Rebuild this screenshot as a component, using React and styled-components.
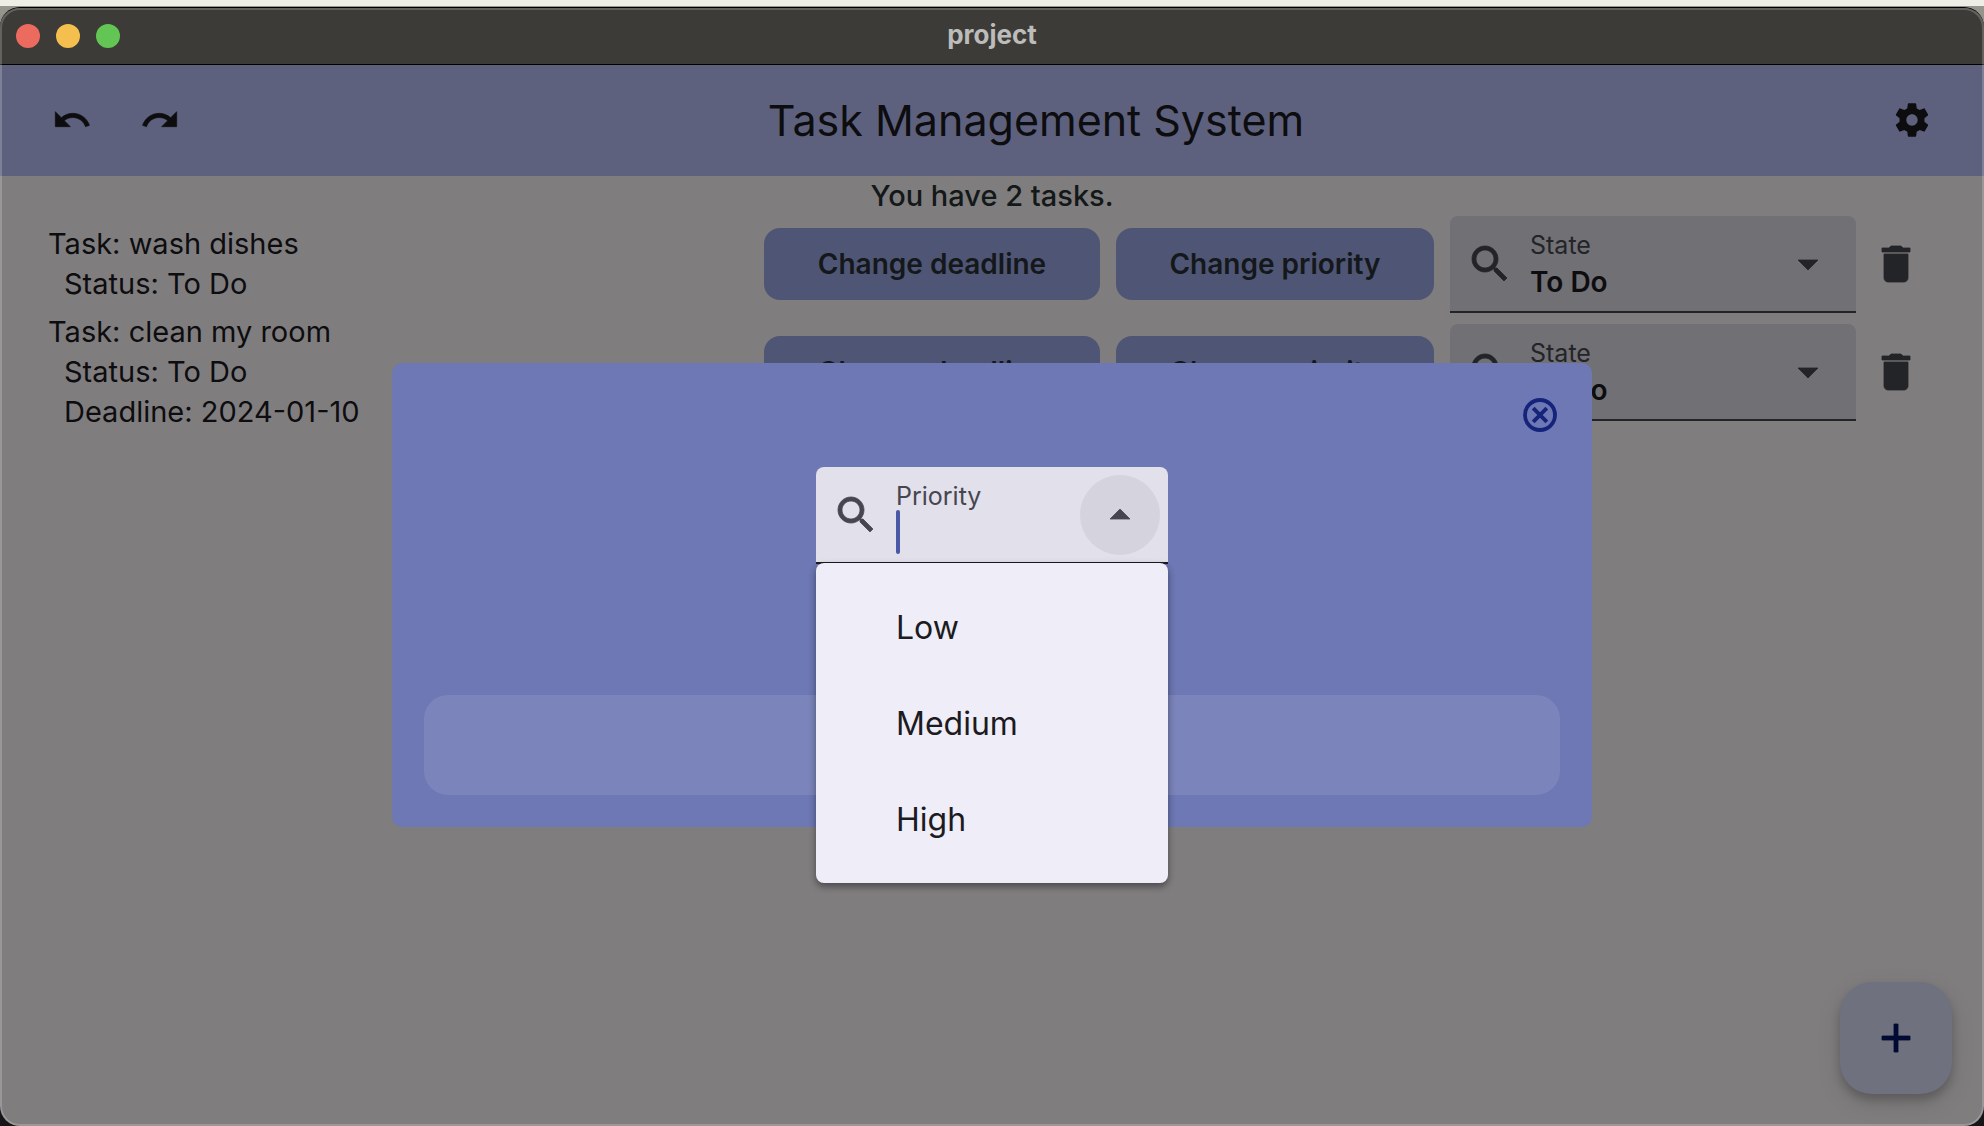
import React, { useState } from "react";
import styled, { createGlobalStyle } from "styled-components";

const GlobalStyle = createGlobalStyle`
  * { box-sizing: border-box; }
  body {
    margin: 0;
    background: #15151a;
    font-family: Inter, Roboto, "Liberation Sans", sans-serif;
  }
  button, input, select {
    margin: 0;
    padding: 0;
    border: 0;
    background: none;
    color: inherit;
    font: inherit;
    outline: none;
  }
  button { cursor: pointer; }
`;

const Desktop = styled.div`
  display: flex;
  min-height: 100vh;
  padding-top: 7px;
  background: linear-gradient(#efeee6 6px, #95978f 6px, #8c8e86 40px, #15151a 41px);
`;

const Window = styled.div`
  position: relative;
  flex: 1;
  display: flex;
  flex-direction: column;
  overflow: hidden;
  border-radius: 20px;
  border-top: 1px solid #000;
  background: #807d7f;

  &::after {
    content: "";
    position: absolute;
    inset: 0;
    border: 2px solid rgba(255, 255, 255, 0.2);
    border-radius: 20px;
    pointer-events: none;
  }
`;

const TitleBar = styled.header`
  display: flex;
  align-items: center;
  height: 56px;
  padding: 0 16px;
  background: #3c3b38;
`;

const Lights = styled.div`
  flex: 1;
  display: flex;
  gap: 16px;
`;

const Light = styled.button`
  width: 24px;
  height: 24px;
  border-radius: 50%;
  background: ${(p) => p.$color};
`;

const WindowTitle = styled.div`
  color: #bcbcba;
  font-size: 26px;
  line-height: 32px;
  font-weight: 700;
  padding-bottom: 2px;
`;

const Spacer = styled.div`
  flex: 1;
`;

const Content = styled.div`
  position: relative;
  flex: 1;
  display: flex;
  flex-direction: column;
  color: #0d0d0f;
`;

const AppBar = styled.div`
  display: flex;
  align-items: center;
  gap: 8px;
  height: 112px;
  padding: 0 32px;
  background: #5e617e;
  box-shadow: inset 0 1px 0 #000;
`;

const AppTitle = styled.h1`
  flex: 1;
  margin: 0;
  text-align: center;
  font-size: 43px;
  line-height: 56px;
  font-weight: 400;
`;

const IconButton = styled.button`
  flex: none;
  display: flex;
  align-items: center;
  justify-content: center;
  width: ${(p) => p.$size || 80}px;
  height: ${(p) => p.$size || 80}px;
  border-radius: 50%;
  color: ${(p) => p.$color || "#0d0d0f"};
  background: ${(p) => p.$fill || "transparent"};
`;

const Svg = styled.svg`
  display: block;
  flex: none;
  fill: currentColor;
`;

const Summary = styled.p`
  margin: 0;
  color: #131819;
  text-align: center;
  font-size: 29px;
  line-height: 40px;
  font-weight: 500;
`;

const Board = styled.main`
  display: flex;
  align-items: flex-start;
  justify-content: space-between;
  padding: 0 48px;
`;

const TaskList = styled.ul`
  display: flex;
  flex-direction: column;
  gap: 8px;
  margin: 0;
  padding: 8px 0;
  list-style: none;
  font-size: 29px;
  line-height: 40px;
`;

const TaskDetail = styled.div`
  padding-left: 16px;
`;

const Controls = styled.div`
  display: flex;
  flex-direction: column;
  gap: 11px;
`;

const ControlRow = styled.div`
  display: flex;
  align-items: flex-start;
  gap: 16px;
`;

const ActionButton = styled.button`
  height: 72px;
  width: ${(p) => p.$width}px;
  margin-top: 12px;
  border-radius: 16px;
  background: #4f5574;
  color: #14181a;
  font-size: 28px;
  line-height: 40px;
  font-weight: 600;
`;

const Trailing = styled.div`
  margin-top: 8px;
  margin-left: -16px;
`;

const Field = styled.div`
  position: relative;
  display: flex;
  align-items: center;
  width: ${(p) => p.$width}px;
  height: 97px;
  padding: 0 8px 0 16px;
  border-bottom: 2px solid ${(p) => (p.$light ? "#1a1a1f" : "#222427")};
  border-radius: 8px 8px 0 0;
  background: ${(p) => (p.$light ? "#e2e0eb" : "#717075")};
  color: ${(p) => (p.$light ? "#464650" : "#232428")};
`;

const FieldBody = styled.div`
  flex: 1;
  min-width: 0;
  align-self: stretch;
  display: flex;
  flex-direction: column;
  padding: 15px 0 0 16px;
`;

const FieldLabel = styled.label`
  font-size: 25px;
  line-height: 28px;
`;

const StateSelect = styled.select`
  appearance: none;
  width: 100%;
  height: 46px;
  color: #0d0d0f;
  font-size: 28px;
  line-height: 40px;
  font-weight: 600;
`;

const InputLine = styled.div`
  display: flex;
  align-items: center;
  height: 44px;
`;

const Caret = styled.span`
  flex: none;
  width: 4px;
  height: 44px;
  border-radius: 2px;
  background: #4a59a5;
`;

const TextInput = styled.input`
  flex: 1;
  min-width: 0;
  height: 44px;
  color: #1b1b21;
  font-size: 32px;
  caret-color: transparent;
`;

const ArrowSlot = styled.span`
  flex: none;
  display: flex;
  justify-content: center;
  width: 80px;
  pointer-events: none;
`;

const Fab = styled.button`
  position: absolute;
  right: 32px;
  bottom: 32px;
  display: flex;
  align-items: center;
  justify-content: center;
  width: 112px;
  height: 112px;
  border-radius: 32px;
  background: #6f717f;
  color: #000a32;
  box-shadow: 0 6px 10px rgba(0, 0, 0, 0.2), 0 8px 24px rgba(0, 0, 0, 0.12);
`;

const Overlay = styled.div`
  position: absolute;
  inset: 0;
  display: flex;
  align-items: center;
  justify-content: center;
`;

const Dialog = styled.section`
  display: flex;
  flex-direction: column;
  align-items: center;
  gap: 32px;
  width: 1200px;
  max-width: 90%;
  padding: 32px;
  border-radius: 10px;
  background: #6d78b4;
`;

const DialogHeader = styled.div`
  align-self: stretch;
  display: flex;
  justify-content: flex-end;
`;

const PickerArea = styled.div`
  padding-bottom: 99px;
`;

const ConfirmButton = styled.button`
  align-self: stretch;
  height: 100px;
  border-radius: 24px;
  background: #7b85bb;
`;

const Menu = styled.ul`
  position: absolute;
  top: calc(100% + 1px);
  left: 0;
  right: 0;
  margin: 0;
  padding: 17px 0 15px;
  list-style: none;
  border-radius: 8px;
  background: #efedf7;
  box-shadow: 0 4px 6px rgba(0, 0, 0, 0.3), 0 2px 8px rgba(0, 0, 0, 0.14);
`;

const MenuOption = styled.button`
  display: block;
  width: 100%;
  height: 96px;
  padding-left: 80px;
  text-align: left;
  color: #1b1b21;
  font-size: 32px;
  line-height: 48px;
`;

const PATHS = {
  undo: "M12.5 8c-2.65 0-5.05.99-6.9 2.6L2 7v9h9l-3.62-3.62c1.39-1.16 3.16-1.88 5.12-1.88 3.54 0 6.55 2.31 7.6 5.5l2.37-.78C21.08 11.03 17.15 8 12.5 8z",
  redo: "M18.4 10.6C16.55 8.99 14.15 8 11.5 8c-4.65 0-8.58 3.03-9.96 7.22L3.9 16c1.05-3.19 4.05-5.5 7.6-5.5 1.95 0 3.73.72 5.12 1.88L13 16h9V7l-3.6 3.6z",
  settings:
    "M19.43 12.98c.04-.32.07-.64.07-.98s-.03-.66-.07-.98l2.11-1.65c.19-.15.24-.42.12-.64l-2-3.46c-.12-.22-.39-.3-.61-.22l-2.49 1c-.52-.4-1.08-.73-1.69-.98l-.38-2.65C14.46 2.18 14.25 2 14 2h-4c-.25 0-.46.18-.49.42l-.38 2.65c-.61.25-1.17.59-1.69.98l-2.49-1c-.23-.09-.49 0-.61.22l-2 3.46c-.13.22-.07.49.12.64l2.11 1.65c-.04.32-.07.65-.07.98s.03.66.07.98l-2.11 1.65c-.19.15-.24.42-.12.64l2 3.46c.12.22.39.3.61.22l2.49-1c.52.4 1.08.73 1.69.98l.38 2.65c.03.24.24.42.49.42h4c.25 0 .46-.18.49-.42l.38-2.65c.61-.25 1.17-.59 1.69-.98l2.49 1c.23.09.49 0 .61-.22l2-3.46c.12-.22.07-.49-.12-.64l-2.11-1.65zM12 15.4c-1.88 0-3.4-1.52-3.4-3.4s1.52-3.4 3.4-3.4 3.4 1.52 3.4 3.4-1.52 3.4-3.4 3.4z",
  search:
    "M15.5 14h-.79l-.28-.27C15.41 12.59 16 11.11 16 9.5 16 5.91 13.09 3 9.5 3S3 5.91 3 9.5 5.91 16 9.5 16c1.61 0 3.09-.59 4.23-1.57l.27.28v.79l5 4.99L20.49 19l-4.99-5zm-6 0C7.01 14 5 11.99 5 9.5S7.01 5 9.5 5 14 7.01 14 9.5 11.99 14 9.5 14z",
  down: "M7 10l5 5 5-5z",
  up: "M7 14l5-5 5 5z",
  trash: "M6 19c0 1.1.9 2 2 2h8c1.1 0 2-.9 2-2V7H6v12zM19 4h-3.5l-1-1h-5l-1 1H5v2h14V4z",
  add: "M19 13h-6v6h-2v-6H5v-2h6V5h2v6h6v2z",
};

function Icon({ name, size = 48, outline = 0.4 }) {
  return (
    <Svg width={size} height={size} viewBox="0 0 24 24" aria-hidden="true">
      <path d={PATHS[name]} stroke="currentColor" strokeWidth={outline} />
    </Svg>
  );
}

function CloseIcon() {
  return (
    <Svg width="40" height="40" viewBox="0 0 24 24" aria-hidden="true">
      <g fill="none" stroke="currentColor" strokeWidth="2.3">
        <circle cx="12" cy="12" r="9" />
        <path d="M7.9 7.9l8.2 8.2M16.1 7.9l-8.2 8.2" />
      </g>
    </Svg>
  );
}

const TASKS = [
  { id: "t1", name: "wash dishes", status: "To Do" },
  { id: "t2", name: "clean my room", status: "To Do", deadline: "2024-01-10" },
];

const PRIORITIES = ["Low", "Medium", "High"];

function TaskControls({ task }) {
  const id = `state-${task.id}`;
  return (
    <ControlRow>
      <ActionButton $width={336}>Change deadline</ActionButton>
      <ActionButton $width={318}>Change priority</ActionButton>
      <Field $width={406}>
        <Icon name="search" />
        <FieldBody>
          <FieldLabel htmlFor={id}>State</FieldLabel>
          <StateSelect id={id} defaultValue={task.status}>
            <option>To Do</option>
            <option>In Progress</option>
            <option>Done</option>
          </StateSelect>
        </FieldBody>
        <ArrowSlot>
          <Icon name="down" />
        </ArrowSlot>
      </Field>
      <Trailing>
        <IconButton aria-label="Delete task" $color="#232428">
          <Icon name="trash" />
        </IconButton>
      </Trailing>
    </ControlRow>
  );
}

function PriorityPicker() {
  const [value, setValue] = useState("");
  return (
    <Field $light $width={352}>
      <Icon name="search" />
      <FieldBody>
        <FieldLabel htmlFor="priority">Priority</FieldLabel>
        <InputLine>
          <Caret />
          <TextInput id="priority" value={value} onChange={(e) => setValue(e.target.value)} />
        </InputLine>
      </FieldBody>
      <IconButton aria-label="Close menu" $color="#464650" $fill="#d5d3de">
        <Icon name="up" />
      </IconButton>
      <Menu>
        {PRIORITIES.map((p) => (
          <li key={p}>
            <MenuOption onClick={() => setValue(p)}>{p}</MenuOption>
          </li>
        ))}
      </Menu>
    </Field>
  );
}

export default function App() {
  return (
    <>
      <GlobalStyle />
      <Desktop>
        <Window>
          <TitleBar>
            <Lights>
              <Light $color="#ed6a5f" aria-label="Close" />
              <Light $color="#f5bf4f" aria-label="Minimize" />
              <Light $color="#62c554" aria-label="Zoom" />
            </Lights>
            <WindowTitle>project</WindowTitle>
            <Spacer />
          </TitleBar>
          <Content>
            <AppBar>
              <IconButton aria-label="Undo">
                <Icon name="undo" size={40} />
              </IconButton>
              <IconButton aria-label="Redo">
                <Icon name="redo" size={40} />
              </IconButton>
              <AppTitle>Task Management System</AppTitle>
              <IconButton aria-label="Settings">
                <Icon name="settings" size={40} outline={0} />
              </IconButton>
            </AppBar>
            <Summary>You have 2 tasks.</Summary>
            <Board>
              <TaskList>
                {TASKS.map((t) => (
                  <li key={t.id}>
                    <div>Task: {t.name}</div>
                    <TaskDetail>Status: {t.status}</TaskDetail>
                    {t.deadline && <TaskDetail>Deadline: {t.deadline}</TaskDetail>}
                  </li>
                ))}
              </TaskList>
              <Controls>
                {TASKS.map((t) => (
                  <TaskControls key={t.id} task={t} />
                ))}
              </Controls>
            </Board>
            <Fab aria-label="Add task">
              <Icon name="add" />
            </Fab>
            <Overlay>
              <Dialog role="dialog" aria-label="Change priority">
                <DialogHeader>
                  <IconButton aria-label="Close dialog" $size={40} $color="#16237a">
                    <CloseIcon />
                  </IconButton>
                </DialogHeader>
                <PickerArea>
                  <PriorityPicker />
                </PickerArea>
                <ConfirmButton aria-label="Confirm priority" />
              </Dialog>
            </Overlay>
          </Content>
        </Window>
      </Desktop>
    </>
  );
}
